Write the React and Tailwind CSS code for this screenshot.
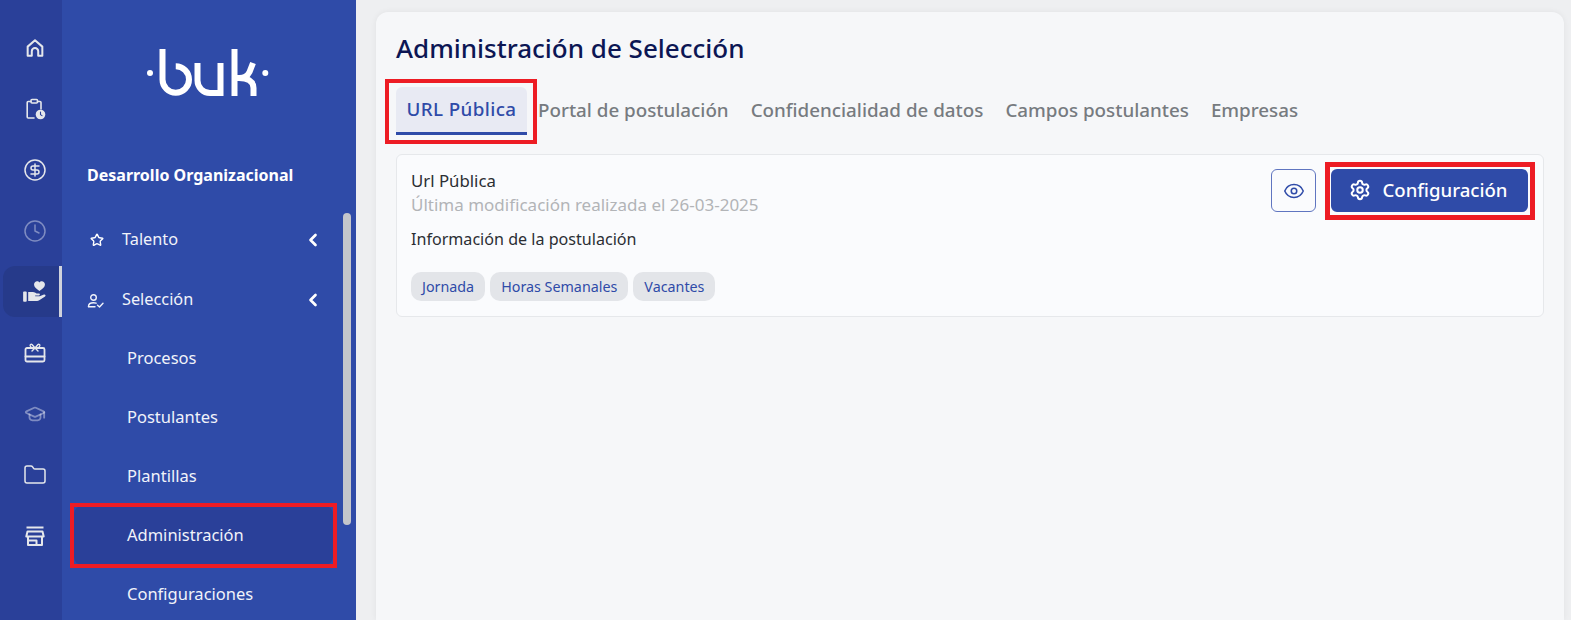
import { CircleDollarSign, Clock, GraduationCap, Folder, Star, ChevronLeft, Eye, Settings } from 'lucide-react';

function HomeIcon() {
  return (
    <svg width="22" height="22" viewBox="0 0 24 24" fill="none" stroke="currentColor" strokeWidth="2.200" strokeLinecap="round" strokeLinejoin="round">
      <path d="M4 20.500V10.500L12 3.500l8 7v10h-4.500V15.500a3.500 3.500 0 0 0-7 0v5z" />
    </svg>
  );
}

function StoreIcon() {
  return (
    <svg width="24" height="24" viewBox="0 0 24 24" fill="none" stroke="currentColor" strokeWidth="2" strokeLinejoin="round">
      <path d="M3.500 3.500h17" />
      <path d="M4.500 7.500h15l1.200 5H3.300z" />
      <path d="M5 12.500v8.500h14v-8.500" />
      <path d="M5.500 16.500h8v4.500" />
    </svg>
  );
}

function ClipboardClock() {
  return (
    <svg width="22" height="22" viewBox="0 0 22 22" fill="none" stroke="currentColor" strokeWidth="1.600" strokeLinecap="round" strokeLinejoin="round">
      <path d="M10 20H4.200a1 1 0 0 1-1-1V4.500a1 1 0 0 1 1-1H7" />
      <path d="M13.500 3.500H16a1 1 0 0 1 1 1V11" />
      <rect x="7" y="1.500" width="6.500" height="3.500" rx="1" />
      <circle cx="16.500" cy="16.500" r="4.800" fill="currentColor" stroke="none" />
      <path d="M16.500 14v2.600l1.500 1" stroke="#2a4099" strokeWidth="1.100" />
    </svg>
  );
}

function HandHeart() {
  return (
    <svg width="27" height="25" viewBox="0 0 24 22" fill="currentColor">
      <path d="M15.500 10.500c-3-2.200-4.800-3.700-4.800-5.800C10.700 3 12 1.800 13.400 1.800c.9 0 1.700.4 2.100 1.100.4-.7 1.200-1.100 2.100-1.100 1.500 0 2.800 1.200 2.800 2.900 0 2.100-1.800 3.600-4.900 5.800z" />
      <rect x="1" y="11" width="3.200" height="9" rx=".8" />
      <path d="M5.500 11.500h4.300c1 0 2.400.9 3.200 1.300h2.200c.9 0 1 1.700 0 1.700h-3.500v.8h4l3.800-1.600c1.200-.4 2 .9 1 1.700l-5.500 3.700c-.5.300-1 .4-1.500.4H5.500z" />
    </svg>
  );
}

function GiftCard() {
  return (
    <svg width="22" height="22" viewBox="0 0 22 22" fill="none" stroke="currentColor" strokeWidth="1.800" strokeLinecap="round" strokeLinejoin="round">
      <rect x="1.500" y="6" width="19" height="13.500" rx="1.500" />
      <path d="M1.500 14.500h19" />
      <path d="M11 6 8 2.500c-1-.8-2.300.3-1.700 1.500L7.500 6M11 6l3-3.500c1-.8 2.300.3 1.700 1.500L14.500 6M8 9l3-3 3 3" strokeWidth="1.400" />
    </svg>
  );
}

function UserCheck() {
  return (
    <svg width="18" height="18" viewBox="0 0 18 18" fill="none" stroke="currentColor" strokeWidth="1.400" strokeLinecap="round" strokeLinejoin="round">
      <circle cx="6.500" cy="6.500" r="2.800" />
      <path d="M1.500 15.500c0-2.600 2.200-3.700 5-3.700 1 0 1.900.1 2.600.4" />
      <path d="M1.500 15.800h6.500" />
      <path d="m10.500 14.300 2 1.700 3.500-3.800" />
    </svg>
  );
}

function BukLogo() {
  return (
    <svg width="135" height="58" viewBox="0 0 135 58" fill="none" stroke="#fff" strokeWidth="6">
      <circle cx="10" cy="29" r="3" fill="#fff" stroke="none" />
      <path d="M22.500 5V35.500A13.250 13.250 0 1 0 35.750 22.250" />
      <path d="M57.500 19V36.500a12.500 12.500 0 0 0 12.500 12.500H80.500V19" />
      <path d="M94.500 5V52" />
      <path d="M94.500 34h5c6 0 9-4 10-6l3.500-9" />
      <path d="M99 34c8 0 14.500 3 14.500 10v8" />
      <circle cx="125.300" cy="29" r="3" fill="#fff" stroke="none" />
    </svg>
  );
}

const railItems = [
  { icon: <HomeIcon />, tone: 'text-gray-200' },
  { icon: <ClipboardClock />, tone: 'text-gray-200' },
  { icon: <CircleDollarSign size={24} strokeWidth={1.500} />, tone: 'text-gray-200' },
  { icon: <Clock size={24} strokeWidth={1.500} />, tone: 'text-white/40' },
  { icon: <HandHeart />, tone: 'text-gray-200', active: true },
  { icon: <GiftCard />, tone: 'text-gray-200' },
  { icon: <GraduationCap size={22} strokeWidth={2} />, tone: 'text-white/40' },
  { icon: <Folder size={24} strokeWidth={1.500} />, tone: 'text-gray-200' },
  { icon: <StoreIcon />, tone: 'text-gray-200' },
];

function Rail() {
  return (
    <div className="w-[62px] shrink-0 bg-[#2a4099] flex flex-col gap-[10px] pt-[22px] pl-[3px]">
      {railItems.map((item, i) => (
        <div
          key={i}
          className={`relative h-[51px] shrink-0 pl-[5px] flex items-center justify-center rounded-l-xl ${item.tone} ${item.active ? 'bg-[#263a8a]' : ''}`}
        >
          {item.icon}
          {item.active && <span className="absolute right-0 top-0 bottom-0 w-[3px] bg-[#d0d3dc]" />}
        </div>
      ))}
    </div>
  );
}

function NavRow({ icon, label }) {
  return (
    <div className="h-[59px] flex items-center text-[#f1f3fa] text-[16.300px]">
      <span className="w-[35px] flex items-center">{icon}</span>
      <span className="flex-1">{label}</span>
      <ChevronLeft size={20} strokeWidth={3.200} className="mr-[33px] text-white" />
    </div>
  );
}

function SubRow({ label, active }) {
  return (
    <div className={`h-[59px] flex items-center pl-[53px] w-[259px] rounded-lg text-[#f1f3fa] text-[16.500px] ${active ? 'bg-[#2a4099]' : ''}`}>
      {label}
    </div>
  );
}

function Sidebar() {
  return (
    <div className="relative w-[294px] shrink-0 bg-[#2f4ba8] overflow-hidden">
      <div className="pl-[78px] pt-[44px]">
        <BukLogo />
      </div>
      <div className="pl-[25px] mt-[62px] font-bold text-white text-[16px] leading-[22px]">Desarrollo Organizacional</div>
      <div className="pl-[25px] mt-[24px] flex flex-col gap-[1px]">
        <NavRow icon={<Star size={14} strokeWidth={2.400} className="ml-[3px] text-white" />} label="Talento" />
        <NavRow icon={<UserCheck />} label="Selección" />
      </div>
      <div className="pl-[12px]">
        <SubRow label="Procesos" />
        <SubRow label="Postulantes" />
        <SubRow label="Plantillas" />
        <div className="relative">
          <SubRow label="Administración" active />
          <span className="absolute left-[-4px] top-[-3px] w-[267px] h-[65px] border-[4px] border-[#ed1c24]" />
        </div>
        <SubRow label="Configuraciones" />
      </div>
      <div className="absolute left-[281px] top-[213px] w-[8px] h-[312px] rounded-full bg-[#c4c6cb]" />
    </div>
  );
}

function Tag({ label }) {
  return (
    <span className="h-[29px] px-[11px] flex items-center rounded-[10px] bg-[#e3e5e9] text-[#2f4ba8] text-[14.300px]">{label}</span>
  );
}

function Tab({ label }) {
  return <span className="px-[11px] h-[48px] pb-[2px] flex items-center text-[18.800px] font-medium text-[#777b80]">{label}</span>;
}

function Main() {
  return (
    <div className="flex-1 min-w-0 bg-[#eeeff1] pl-[20px] pt-[12px] pr-[7px]">
      <div className="h-full rounded-t-xl bg-[#f6f7f9] pl-[20px] pr-[20px] pt-[18px] shadow-[0_0_6px_rgba(0,0,0,0.06)]">
        <h1 className="text-[26px] leading-[36px] font-medium text-[#0c1654]">Administración de Selección</h1>
        <div className="flex mt-[21px] items-start">
          <div className="relative">
            <span className="h-[48px] w-[131px] flex items-center justify-center rounded-t-md bg-[#e8eaf3] border-b-[3px] border-[#2f4ba8] text-[18.800px] tracking-[0.4px] font-medium text-[#2f4ba8]">URL Pública</span>
            <span className="absolute left-[-11px] top-[-8px] right-[-10px] bottom-[-9px] border-[4px] border-[#ed1c24]" />
          </div>
          <Tab label="Portal de postulación" />
          <Tab label="Confidencialidad de datos" />
          <Tab label="Campos postulantes" />
          <Tab label="Empresas" />
        </div>
        <div className="mt-[19px] h-[163px] rounded-md border border-[#e6e8eb] bg-[#fafbfd] pl-[14px] pr-[15px] pt-[14px] flex justify-between items-start">
          <div>
            <div className="text-[16.800px] leading-[24px] text-[#2b2e33]">Url Pública</div>
            <div className="text-[17px] leading-[24px] text-[#b2b4b7]">Última modificación realizada el 26-03-2025</div>
            <div className="mt-[10px] text-[16.100px] leading-[24px] text-[#2b2e33]">Información de la postulación</div>
            <div className="flex gap-[5px] mt-[21px]">
              <Tag label="Jornada" />
              <Tag label="Horas Semanales" />
              <Tag label="Vacantes" />
            </div>
          </div>
          <div className="flex items-center gap-[15px]">
            <button className="w-[45px] h-[43px] flex items-center justify-center rounded-md border border-[#5f75c0] text-[#2f4ba8]">
              <Eye size={22} strokeWidth={1.700} />
            </button>
            <div className="relative">
              <button className="w-[197px] h-[43px] pb-[2px] pr-[3px] flex items-center justify-center gap-[12px] rounded-md bg-[#2f4ba8] text-white text-[18.600px] font-medium">
                <Settings size={22} strokeWidth={2.200} />
                Configuración
              </button>
              <span className="absolute left-[-6px] top-[-7px] right-[-7px] bottom-[-8px] border-[5px] border-[#ed1c24]" />
            </div>
          </div>
        </div>
      </div>
    </div>
  );
}

export default function App() {
  return (
    <div className="flex h-[620px] w-[1571px] overflow-hidden font-['Noto_Sans',sans-serif]">
      <Rail />
      <Sidebar />
      <Main />
    </div>
  );
}
